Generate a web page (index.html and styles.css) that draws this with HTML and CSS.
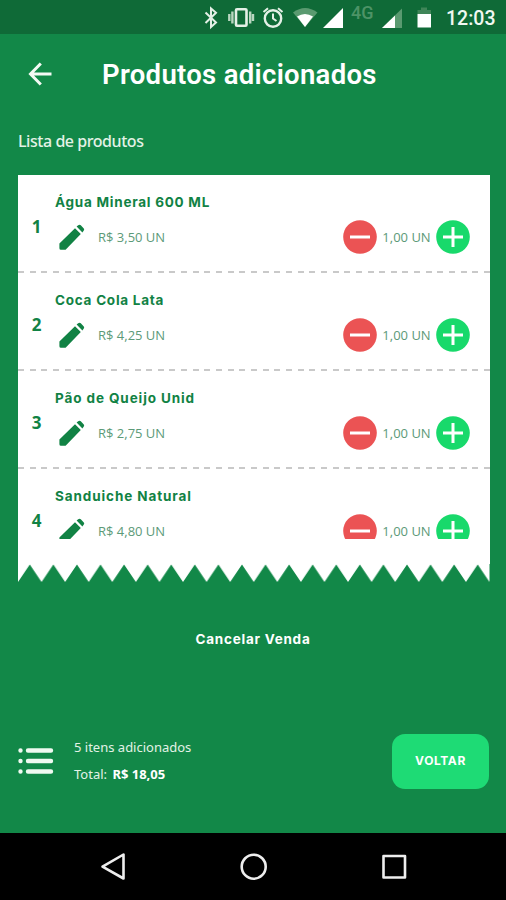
FILE: index.html
```
<!doctype html>
<html lang="pt-BR">
<head>
<meta charset="utf-8">
<title>Produtos adicionados</title>
<link rel="stylesheet" href="styles.css">
</head>

<body>

<svg class="defs">
	<symbol id="pencil" viewBox="0 0 28 28">
		<path d="M1.4 20.4L17 5.2 22.800 11 7.600 26.800H3Q1.4 26.800 1.4 25.200Z M18.600 3.600L20.200 2.200Q21.600 1.200 22.800 2.200L25.800 5.400Q26.600 6.400 25.800 7.600L24.400 9.400Z"/>
	</symbol>
	<symbol id="minus" viewBox="0 0 34 34">
		<circle cx="17" cy="17" r="16.8"/>
		<path d="M7 17H27" stroke="#fff" stroke-width="3"/>
	</symbol>
	<symbol id="plus" viewBox="0 0 34 34">
		<circle cx="17" cy="17" r="16.8"/>
		<path d="M7 17H27M17 7V27" stroke="#fff" stroke-width="3"/>
	</symbol>
</svg>

<div class="status">
	<svg width="240" height="34" viewBox="200 0 240 34">
		<path d="M205.5 12.5L216 22.5 211 27V8.5L216 12.8 205.5 23" fill="none" stroke="#e4f0e6" stroke-width="2"/>
		<rect x="236" y="9.2" width="10.5" height="16.6" rx="1" fill="none" stroke="#e4f0e6" stroke-width="2.6"/>
		<path d="M232.4 11.5V23.5M250.2 11.5V23.5M229.3 14V21M253 14V21" stroke="#b9d6c0" stroke-width="2.4"/>
		<circle cx="273" cy="18.5" r="8.2" fill="none" stroke="#e4f0e6" stroke-width="2.4"/>
		<path d="M273 13.5V18.5L276.5 21M263.5 12L268 8.2M282.5 12L278 8.2" fill="none" stroke="#e4f0e6" stroke-width="2"/>
		<path d="M293 12.5Q305 3.5 317.5 12.5L305 27Z" fill="#5a9a70"/>
		<path d="M297 16.5Q305 11.5 313 16.5L305 27Z" fill="#fff"/>
		<path d="M343 8V28H323Z" fill="#fff"/>
		<path d="M402 8.5V28H382Z" fill="#5a9a70"/>
		<path d="M395 15.5V28H382Z" fill="#fff"/>
		<path d="M417.5 10H421V7.5H427V10H431V14H417.5Z" fill="#3f8558"/>
		<path d="M417.5 14H431V27.5H417.5Z" fill="#fff"/>
	</svg>
	<span class="net">4G</span>
	<span class="time">12:03</span>
</div>

<div class="top">
	<svg width="24" height="24" viewBox="0 0 24 24"><path d="M23.5 12H2.5M12.8 1.5L2.5 12 12.8 22.5" fill="none" stroke="#f4faf5" stroke-width="3"/></svg>
	<h1>Produtos adicionados</h1>
</div>

<h2>Lista de produtos</h2>

<div class="ticket">
	<ul>
		<li>
			<b class="num">1</b>
			<div class="info">
				<h3>Água Mineral 600 ML</h3>
				<div class="line">
					<svg class="edit"><use href="#pencil"/></svg>
					<span class="price">R$ 3,50 UN</span>
					<svg class="btn less"><use href="#minus"/></svg>
					<span class="qtd">1,00 UN</span>
					<svg class="btn more"><use href="#plus"/></svg>
				</div>
			</div>
		</li>
		<li>
			<b class="num">2</b>
			<div class="info">
				<h3>Coca Cola Lata</h3>
				<div class="line">
					<svg class="edit"><use href="#pencil"/></svg>
					<span class="price">R$ 4,25 UN</span>
					<svg class="btn less"><use href="#minus"/></svg>
					<span class="qtd">1,00 UN</span>
					<svg class="btn more"><use href="#plus"/></svg>
				</div>
			</div>
		</li>
		<li>
			<b class="num">3</b>
			<div class="info">
				<h3 class="wide">Pão de Queijo Unid</h3>
				<div class="line">
					<svg class="edit"><use href="#pencil"/></svg>
					<span class="price">R$ 2,75 UN</span>
					<svg class="btn less"><use href="#minus"/></svg>
					<span class="qtd">1,00 UN</span>
					<svg class="btn more"><use href="#plus"/></svg>
				</div>
			</div>
		</li>
		<li>
			<b class="num">4</b>
			<div class="info">
				<h3 class="wide">Sanduiche Natural</h3>
				<div class="line">
					<svg class="edit"><use href="#pencil"/></svg>
					<span class="price">R$ 4,80 UN</span>
					<svg class="btn less"><use href="#minus"/></svg>
					<span class="qtd">1,00 UN</span>
					<svg class="btn more"><use href="#plus"/></svg>
				</div>
			</div>
		</li>
	</ul>
</div>
<svg class="zigzag">
	<defs>
		<pattern id="teeth" width="23.575" height="18" patternUnits="userSpaceOnUse">
			<path d="M0 0H23.575V18L11.8 0.5 0 18Z" fill="#fff"/>
		</pattern>
	</defs>
	<rect width="471.5" height="18" fill="url(#teeth)"/>
</svg>

<p class="cancel">Cancelar Venda</p>

<div class="total">
	<svg width="36" height="28" viewBox="0 0 36 28">
		<path d="M10 3.500H33M10 14H33M10 24.500H33M2.500 3.500H2.510M2.500 14H2.510M2.500 24.500H2.510" stroke="#effaf1" stroke-width="4.400" stroke-linecap="round"/>
	</svg>
	<div class="sum">
		<p>5 itens adicionados</p>
		<p>Total: <b>R$ 18,05</b></p>
	</div>
	<a class="back">VOLTAR</a>
</div>

<div class="nav">
	<svg width="506" height="67" viewBox="0 833 506 67" fill="none" stroke="#eee" stroke-width="2.6" stroke-linejoin="round">
		<path d="M123.5 854.5V878.5L102.5 866.7Z"/>
		<circle cx="253.7" cy="866.7" r="12"/>
		<rect x="383.5" y="856" width="21.5" height="21.5"/>
	</svg>
</div>

</body>
</html>
```
FILE: styles.css
```
* { padding: 0; margin: 0; box-sizing: border-box; }
li { list-style: none; }
svg { display: block; flex: none; }
.defs { display: none; }

body{
	width: 506px;
	height: 900px;
	background: #128848;
	color: #fff;
	font-family: "Open Sans", "Noto Sans", sans-serif;
	white-space: nowrap;
	overflow: hidden;
}

.status {
	position: relative;
	height: 34px;
	padding-left: 200px;
	display: flex;
	background: #0f6a37;
	font-family: Roboto, sans-serif;
}
.status .net {
	position: absolute;
	left: 351px;
	top: 3px;
	font-size: 18px;
	line-height: 20px;
	font-weight: 500;
	color: #4d9366;
}
.status .time {
	margin-left: 6px;
	font-size: 19.5px;
	line-height: 37px;
	font-weight: 500;
	color: #f1f8f2;
}

.top {
	height: 80px;
	padding-left: 28px;
	display: flex;
	align-items: center;
}
.top h1 {
	margin-left: 50px;
	font: 600 27.5px/80px Roboto, sans-serif;
	letter-spacing: 0.3px;
	padding-top: 2px;
}

h2 {
	height: 61px;
	padding: 15px 0 0 18px;
	font: 500 16px/24px "Noto Sans", sans-serif;
	letter-spacing: -0.45px;
	color: #e3f2e6;
}

.ticket {
	width: 471.5px;
	height: 389px;
	margin-left: 18px;
	background: #fff;
	color: #118244;
}
.ticket ul {
	height: 363.5px;
	overflow: hidden;
}
.ticket li {
	height: 98px;
	display: flex;
	background: repeating-linear-gradient(90deg, #c9c9c9 0 6px, transparent 6px 11.65px) 0 96px / 100% 2px no-repeat;
}
.num {
	width: 37px;
	text-align: center;
	font: 700 17px/24px "Open Sans", sans-serif;
	padding-top: 40px;
}
.info {
	flex: 1;
	padding-top: 17px;
}
.info h3 {
	height: 20px;
	font: 700 13.5px/20px Inter, sans-serif;
	letter-spacing: 0.75px;
}
.info h3.wide { letter-spacing: 0.9px; }
.line {
	height: 34px;
	margin-top: 8px;
	padding-right: 19.5px;
	display: flex;
	align-items: center;
}
.edit {
	width: 28px;
	height: 28px;
	margin-left: 3px;
	fill: #118244;
}
.price {
	margin-left: 12px;
	flex: 1;
}
.price, .qtd {
	font-size: 13px;
	line-height: 14px;
	color: #5c9a78;
}
.qtd {
	width: 59px;
	text-align: center;
}
.btn {
	width: 34px;
	height: 34px;
}
.less { fill: #eb5354; }
.more { fill: #18d96b; }

.zigzag {
	width: 471.5px;
	height: 18px;
	margin-left: 18px;
}

.cancel {
	margin-top: 47px;
	text-align: center;
	font: 700 13.5px/20px Inter, sans-serif;
	letter-spacing: 0.75px;
}

.total {
	height: 56px;
	margin: 84px 17px 0 18px;
	display: flex;
	align-items: center;
}
.sum {
	margin-left: 20px;
	flex: 1;
	font: 400 13px/27px "Noto Sans", sans-serif;
	color: #e3f2e6;
}
.sum b { margin-left: 2px; color: #fff; }
.back {
	width: 97px;
	height: 55px;
	border-radius: 13px;
	background: #1edb75;
	text-align: center;
	font: 700 12px/54px Inter, sans-serif;
	letter-spacing: 0.6px;
}

.nav {
	height: 67px;
	margin-top: 44px;
	background: #000;
}
```
